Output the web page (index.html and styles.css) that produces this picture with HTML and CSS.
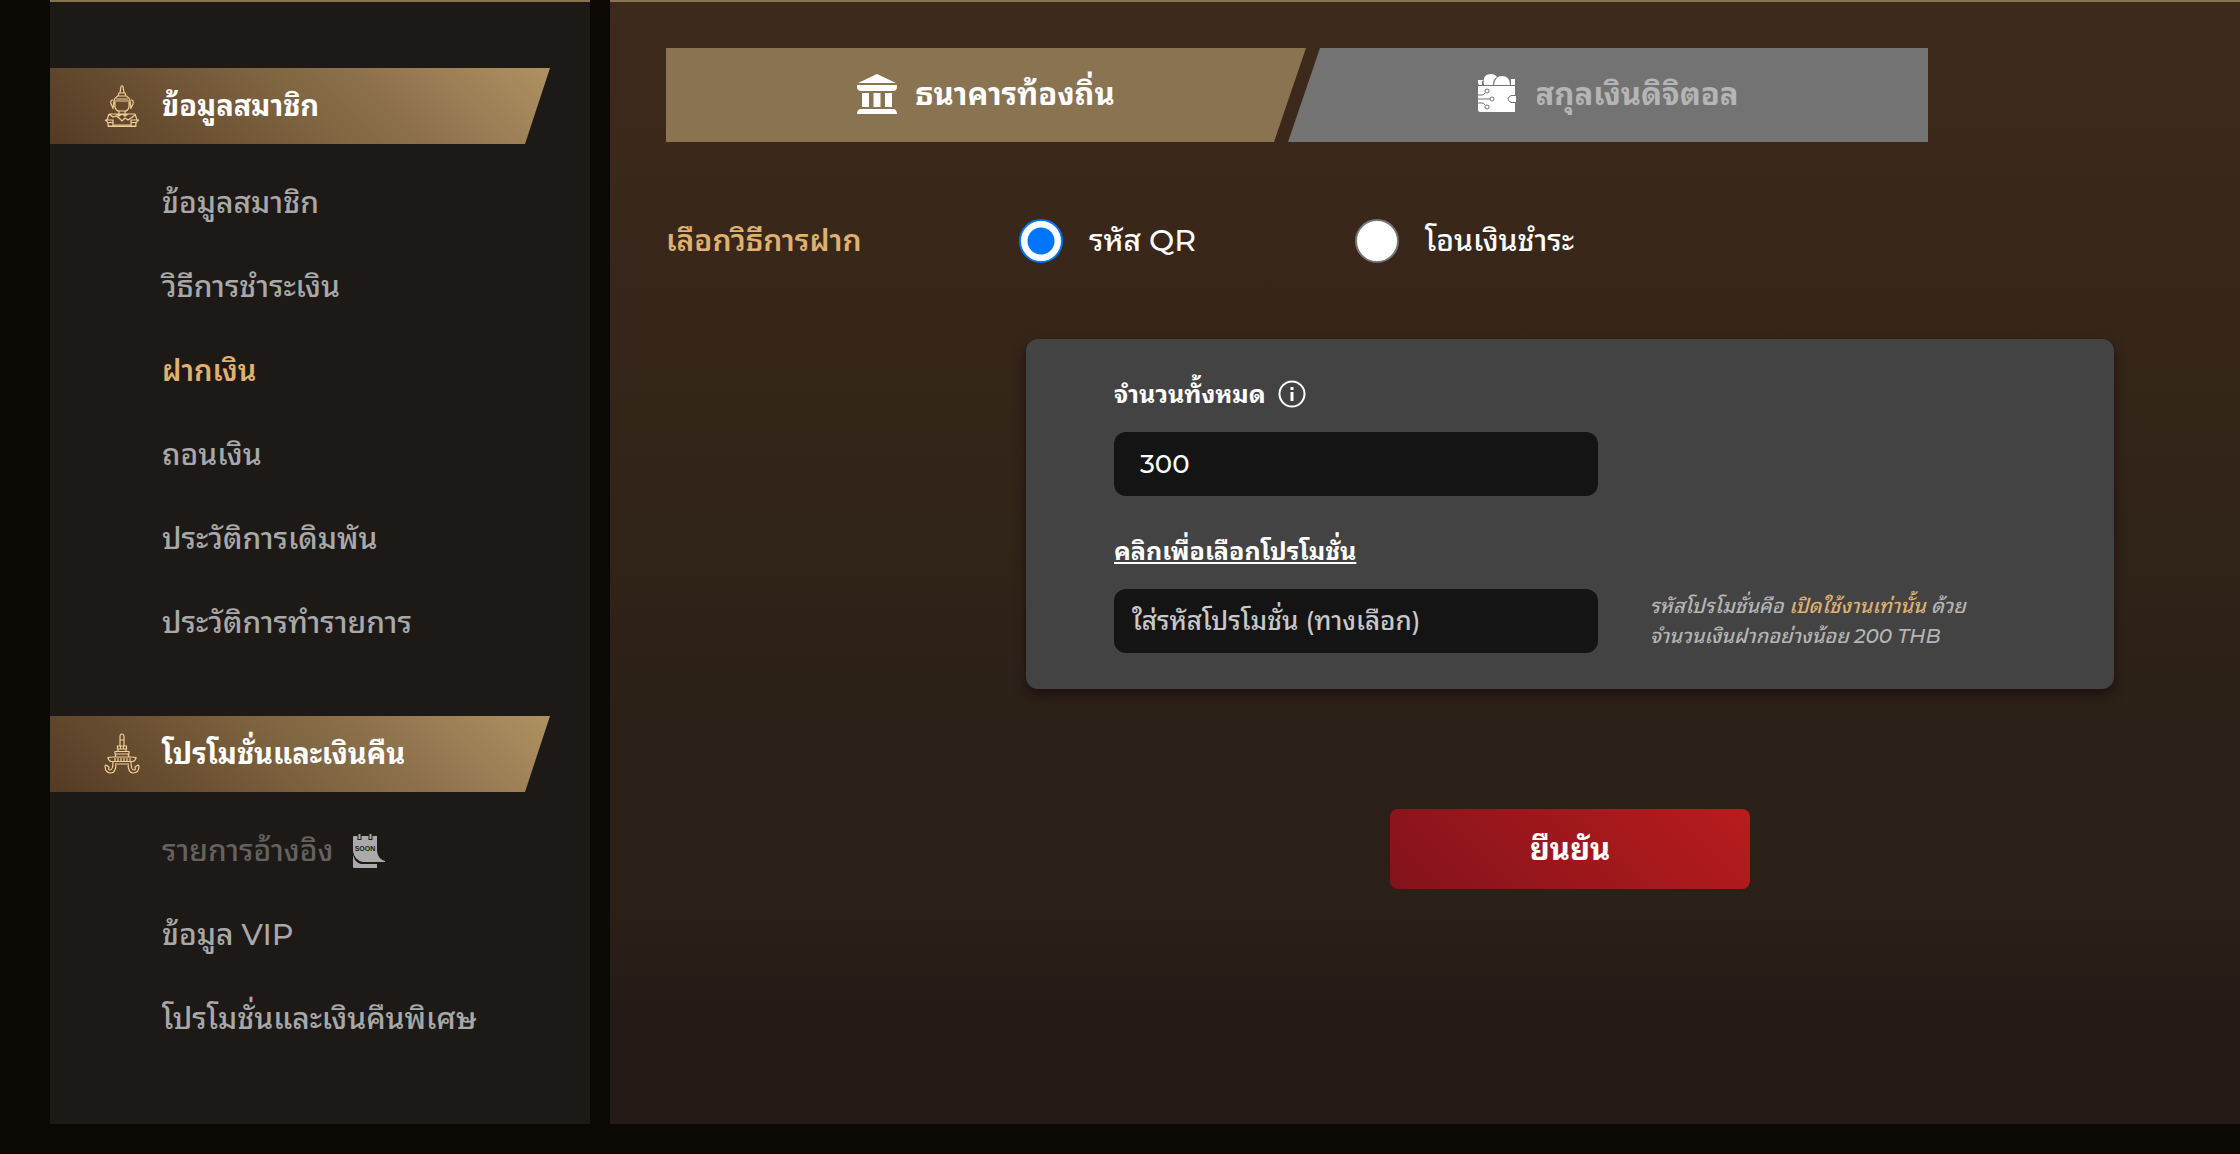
FILE: index.html
```html
<!DOCTYPE html>
<html lang="th">
<head>
<meta charset="utf-8">
<meta name="viewport" content="width=device-width, initial-scale=1">
<title>ฝากเงิน</title>
<link rel="stylesheet" href="styles.css">
</head>
<body>
<div class="page">
  <aside class="sidebar">
    <nav class="menu">
      <h2 class="menu-title">
        <svg class="menu-icon" viewBox="0 0 36 42" aria-hidden="true">
          <path d="M16 8 17 1.500q1-1.500 2 0L20 8M15 8h6l1 3h-8zM14 11q-4 2-4 5h16q0-3-4-5M12 14h12M10 16l-1 8M26 16l1 8M9 15q-3 0-2 4l2 4M27 15q3 0 2 4l-2 4M11 17v5q1 4 4 4h6q3 0 4-4v-5M15 26v4M21 26v4M5 29h26M5 29l4 3 3-1 3 2 3 3 3-3 3 2 3-2 4-3M12 29l3 2 3-2 3 2 3-2M5 29l-2 6M31 29l2 6M1 35h8v6H4q1-4-3-6zM35 35h-8v6h5q-1-4 3-6zM4 37.500h5M27 37.500h5M9 40h18M4 41.300h28"/>
        </svg>
        <span>ข้อมูลสมาชิก</span>
      </h2>
      <ul class="menu-list">
        <li><a href="#">ข้อมูลสมาชิก</a></li>
        <li><a href="#">วิธีการชำระเงิน</a></li>
        <li><a class="active" href="#" aria-current="page">ฝากเงิน</a></li>
        <li><a href="#">ถอนเงิน</a></li>
        <li><a href="#">ประวัติการเดิมพัน</a></li>
        <li><a href="#">ประวัติการทำรายการ</a></li>
      </ul>
    </nav>
    <nav class="menu">
      <h2 class="menu-title">
        <svg class="menu-icon" viewBox="0 0 36 42" aria-hidden="true">
          <path d="M16 7V4q0-3 2-3t2 3v3zM15.500 7h5M16 7v6M20 7v6M13.500 13h9v3h-9zM16.500 13v3M19.500 13v3M14 16v2.500M22 16v2.500M11 18.500h14v2.500H11zM12 21l-1 3M24 21l1 3M9 24h18M9 24l-5 .5q0 2.500 3 4h22q3-1.500 3-4l-5-.5M11 25v3M14 25v3M17 25v3M20 25v3M23 25v3M26 25v3M13 31h10M12 30q0 10-5 10-6 0-6-7l1-1 3 2q-1 3 1 3 3 0 3-8M24 30q0 10 5 10 6 0 6-7l-1-1-3 2q1 3-1 3-3 0-3-8"/>
        </svg>
        <span>โปรโมชั่นและเงินคืน</span>
      </h2>
      <ul class="menu-list">
        <li>
          <a class="disabled" href="#" aria-disabled="true">รายการอ้างอิง</a>
          <svg class="soon" viewBox="0 0 32 34" role="img" aria-label="SOON">
            <path fill="#aaa" d="M1 2h23v15q1 8 8 10v1H10Q1 26 0 17V3q0-1 1-1zM0 21q2 8 8 9h16v4H1q-1 0-1-1z"/>
            <path fill="none" stroke="#1d1917" stroke-width="4" d="M6.500 0v6M17.500 0v6"/>
            <path fill="none" stroke="#aaa" stroke-width="2" d="M6.500 0v5M17.500 0v5"/>
            <text x="12" y="17" text-anchor="middle">SOON</text>
          </svg>
        </li>
        <li><a href="#">ข้อมูล VIP</a></li>
        <li><a href="#">โปรโมชั่นและเงินคืนพิเศษ</a></li>
      </ul>
    </nav>
  </aside>

  <main class="content">
    <div class="tabs" role="tablist">
      <button class="tab tab-local" type="button" role="tab" aria-selected="true">
        <svg class="tab-icon" viewBox="0 0 40 40" aria-hidden="true">
          <path fill="#fff" d="M20 0 39 9H1zM0 11h40v3q-1 3-4 3H4q-3 0-4-3zM5 19h7v14H5zM16.500 19h7v14h-7zM28 19h7v14h-7zM3 35h34q3 1 3 5H0q0-4 3-5z"/>
        </svg>
        <span>ธนาคารท้องถิ่น</span>
      </button>
      <button class="tab tab-crypto" type="button" role="tab" aria-selected="false">
        <svg class="tab-icon" viewBox="0 0 40 40" aria-hidden="true">
          <path fill="#fff" d="M1 6h5q-2 2-1 5H2q-1-1-1-2zM34 5h4v6h-4zM1 12h37v26H3q-2 0-2-2zM7 11Q5 0 14 0q4 0 6 3-4 2-4 8zM17 11q1-9 8-9 8 0 8 9z"/>
          <path fill="none" stroke="#737373" d="M40 21.500h-6q-6 3.500 0 7h6M1 21h4q2 0 3-2M1 25h12M1 29h4q2 0 3 2"/>
          <path fill="#fff" d="M38 22h1v6h-1z"/>
          <g fill="#fff" stroke="#737373"><circle cx="10" cy="17" r="2"/><circle cx="15" cy="25" r="2"/><circle cx="10" cy="33" r="2"/></g>
        </svg>
        <span>สกุลเงินดิจิตอล</span>
      </button>
    </div>

    <form class="deposit">
      <fieldset class="methods">
        <legend class="methods-title">เลือกวิธีการฝาก</legend>
        <div class="method-options">
          <label class="method"><input type="radio" name="method" checked><span>รหัส QR</span></label>
          <label class="method"><input type="radio" name="method"><span>โอนเงินชำระ</span></label>
        </div>
      </fieldset>

      <section class="card">
        <div class="field">
          <div class="field-head">
            <label for="amount">จำนวนทั้งหมด</label>
            <svg class="info" viewBox="0 0 28 28" aria-hidden="true">
              <circle cx="14" cy="14" r="12.500" fill="none" stroke="#fff" stroke-width="2"/>
              <path fill="none" stroke="#fff" stroke-width="3" d="M14 7v3M14 12v9"/>
            </svg>
          </div>
          <input class="box amount" id="amount" type="text" value="300">
        </div>
        <div class="field">
          <div class="field-head"><a class="promo-link" href="#">คลิกเพื่อเลือกโปรโมชั่น</a></div>
          <div class="promo-row">
            <input class="box promo" type="text" aria-label="รหัสโปรโมชั่น" placeholder="ใส่รหัสโปรโมชั่น (ทางเลือก)">
            <p class="note">รหัสโปรโมชั่นคือ <em>เปิดใช้งานเท่านั้น</em> ด้วย<br>จำนวนเงินฝากอย่างน้อย 200 THB</p>
          </div>
        </div>
      </section>

      <button class="submit" type="submit">ยืนยัน</button>
    </form>
  </main>
</div>
</body>
</html>
```
FILE: styles.css
```css
* { box-sizing: border-box; }
body {
  margin: 0;
  background: #0c0804;
  color: #fff;
  font-family: Montserrat, "Noto Sans Thai Looped", Thonburi, Loma, Sarabun, "Noto Sans Thai", "Noto Sans", sans-serif;
  font-size: 30px;
  line-height: 40px;
}
button, input { font: inherit; color: inherit; }
.page { display: flex; gap: 20px; padding: 0 0 30px 50px; min-height: 100vh; }

.sidebar {
  flex: none;
  width: 540px;
  padding-top: 66px;
  border-top: 2px solid #8a7350;
  background: #1d1917;
}
.menu { margin-bottom: 52px; }
.menu-title {
  display: flex;
  align-items: center;
  gap: 22px;
  width: 500px;
  height: 76px;
  margin: 0;
  padding-left: 54px;
  background: linear-gradient(45deg, #543a22, #7f6541 50%, #8c704c 65%, #af9261);
  clip-path: polygon(0 0, 100% 0, calc(100% - 25px) 100%, 0 100%);
  font-size: 29px;
  font-weight: 700;
}
.menu-icon { width: 36px; height: 42px; fill: none; stroke: #f3cf98; stroke-width: 1.2; }
.menu-list { list-style: none; margin: 0; padding: 17px 0 0 112px; }
.menu-list li { display: flex; align-items: center; gap: 20px; height: 84px; }
.menu-list a { color: #a8a8a8; font-weight: 500; text-decoration: none; }
.menu-list a.active { color: #dfb06f; font-size: 29px; font-weight: 600; }
.menu-list a.disabled { color: #646260; }
.menu + .menu { margin-top: -1px; }
.soon { width: 32px; height: 34px; }
.soon text { font: 700 7px "Liberation Sans", sans-serif; fill: #1d1917; }

.content {
  flex: 1;
  min-width: 0;
  padding: 46px 126px 60px 56px;
  border-top: 2px solid #8a7350;
  background: linear-gradient(#3e2a1b, #2a2017 70%, #2a2017 80%, #241a16 92%);
}
.tabs { display: flex; width: 1262px; }
.tab {
  display: flex;
  align-items: center;
  justify-content: center;
  gap: 18px;
  width: 640px;
  height: 94px;
  padding: 0 0 2px;
  border: 0;
  font-size: 31px;
  font-weight: 700;
}
.tab-local { background: #8a7350; clip-path: polygon(0 0, 100% 0, calc(100% - 32px) 100%, 0 100%); }
.tab-crypto { margin-left: -18px; background: #737373; color: #b5b5b5; clip-path: polygon(32px 0, 100% 0, 100% 100%, 0 100%); }
.tab-icon { width: 40px; height: 40px; }

.methods { display: flex; margin: 0; padding: 77px 0 0; border: 0; }
.methods-title { float: left; width: 353px; padding: 2px 0; color: #dfb06f; font-weight: 600; }
.method-options { display: flex; }
.method { display: flex; align-items: center; gap: 26px; width: 336px; font-weight: 500; }
.method input {
  appearance: none;
  width: 44px;
  height: 44px;
  margin: 0;
  border: 2px solid #767676;
  border-radius: 50%;
  background: #fff;
}
.method input:checked { border-color: #0075ff; background: radial-gradient(circle, #0075ff 13px, #fff 14px); }

.card {
  max-width: 1088px;
  margin: 76px 0 0 360px;
  padding: 35px 88px 36px;
  border-radius: 12px;
  background: #434343;
  box-shadow: 0 6px 12px #1e1010;
}
.field + .field { margin-top: 35px; }
.field-head { display: flex; align-items: center; gap: 12px; height: 40px; margin-bottom: 18px; font-size: 25px; font-weight: 700; }
.promo-link { color: #fff; }
.info { width: 28px; height: 28px; }
.box { width: 484px; height: 64px; border: 0; border-radius: 12px; background: #141414; font-size: 26px; font-weight: 500; }
.amount { display: block; padding: 0 26px; }
.promo { flex: none; padding: 0 18px; }
.promo::placeholder { color: #c8c8c8; opacity: 1; }
.promo-row { display: flex; align-items: center; gap: 52px; }
.note { margin: 0; color: #b5b5b5; font-size: 20px; line-height: 30px; font-style: italic; font-weight: 500; white-space: nowrap; }
.note em { color: #dfb06f; }

.submit {
  display: block;
  width: 360px;
  height: 80px;
  margin: 120px 0 0 724px;
  border: 0;
  border-radius: 8px;
  background: linear-gradient(45deg, #82131b, #b91c1c);
  font-size: 31px;
  font-weight: 700;
}
```
